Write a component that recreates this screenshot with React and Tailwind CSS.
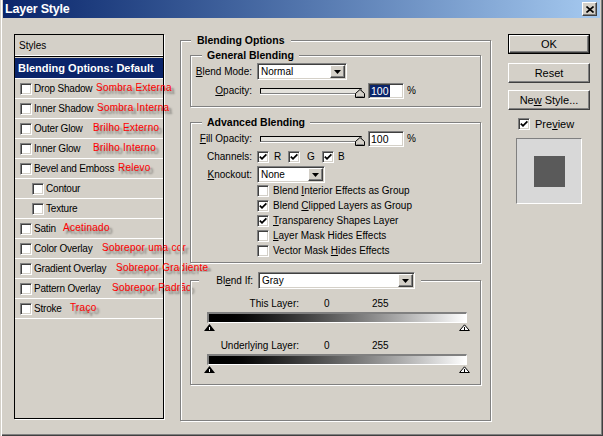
import React from 'react';

const SUNKEN = "border border-t-[#808080] border-l-[#808080] border-b-white border-r-white shadow-[inset_1px_1px_0_#404040,inset_-1px_-1px_0_#d4d0c8]";
const RAISED = "border border-t-white border-l-white border-b-[#404040] border-r-[#404040] shadow-[inset_-1px_-1px_0_#808080]";
const ETCH = "border border-[#808080] shadow-[1px_1px_0_#fff,inset_1px_1px_0_#fff]";

function Check({ checked }) {
  return (
    <span className={`flex w-[12px] h-[12px] shrink-0 bg-white items-center justify-center ${SUNKEN}`}>
      {checked && (
        <svg width="8" height="8" viewBox="0 0 8 8">
          <path d="M0.8 3.6 L3 5.8 L7.4 1.4" stroke="black" strokeWidth="1.8" fill="none" />
        </svg>
      )}
    </span>
  );
}

function Arrow() {
  return (
    <svg width="7" height="4" viewBox="0 0 7 4">
      <path d="M0 0H7L3.5 4Z" fill="black" />
    </svg>
  );
}

function Select({ className, text }) {
  return (
    <div className={`flex h-[17px] bg-white p-[1px] ${SUNKEN} ${className}`}>
      <span className="flex-1 flex items-center pl-[2px] text-[10px] leading-[12px] text-black">{text}</span>
      <span className={`w-[15px] h-full bg-[#d4d0c8] flex items-center justify-center ${RAISED}`}>
        <Arrow />
      </span>
    </div>
  );
}

function Legend({ className, children }) {
  return (
    <span className={`absolute top-[-7px] bg-[#d4d0c8] font-bold text-[10.5px] leading-[12px] text-black ${className}`}>
      {children}
    </span>
  );
}

function Slider() {
  return (
    <div className="relative w-[102px] h-[6px]">
      <div className="w-full h-full border border-t-black border-l-black border-b-[#808080] border-r-[#808080] bg-[#e4e2dc] shadow-[0_1px_0_#fff]" />
      <svg className="absolute left-[95px] top-[1px]" width="10" height="9" viewBox="0 0 10 9">
        <path d="M5 0.5 L9.5 4.5 V8.5 H0.5 V4.5 Z" fill="#d4d0c8" stroke="black" strokeWidth="1" />
        <path d="M1.5 7.5 H8.5" stroke="#808080" strokeWidth="1" />
      </svg>
    </div>
  );
}

function NumInput({ selected }) {
  return (
    <div className={`w-[36px] h-[16px] bg-white p-[1px] flex items-center ${SUNKEN}`}>
      <span className={`h-full flex items-center px-[1px] text-[10.5px] leading-[12px] ${selected ? 'bg-[#0a246a] text-white' : 'text-black'}`}>100</span>
    </div>
  );
}

function Triangles() {
  return (
    <div className="ml-[13px] w-[266px] h-[7px] flex justify-between">
      <svg width="11" height="7" viewBox="0 0 11 7">
        <path d="M5.5 0L11 7H0Z" fill="black" />
        <path d="M5.5 3V6" stroke="white" strokeWidth="1" />
      </svg>
      <svg width="11" height="7" viewBox="0 0 11 7">
        <path d="M5.5 0.8L10.4 6.5H0.6Z" fill="white" stroke="black" strokeWidth="1" />
        <path d="M5.5 3V6" stroke="black" strokeWidth="1" />
      </svg>
    </div>
  );
}

function GradBar() {
  return (
    <div className="ml-[16px] w-[260px] h-[11px] border-t-2 border-l-2 border-r border-b border-t-[#808080] border-l-[#808080] border-r-white border-b-white bg-linear-to-r from-black to-white" />
  );
}

const styleRows = [
  { label: 'Drop Shadow', red: 'Sombra Externa', pos: 'left-[81px]', pad: 'pl-[5px]' },
  { label: 'Inner Shadow', red: 'Sombra Interna', pos: 'left-[82px]', pad: 'pl-[5px]' },
  { label: 'Outer Glow', red: 'Brilho Externo', pos: 'left-[78px]', pad: 'pl-[5px]' },
  { label: 'Inner Glow', red: 'Brilho Interno', pos: 'left-[78px]', pad: 'pl-[5px]' },
  { label: 'Bevel and Emboss', red: 'Relevo', pos: 'left-[103px]', pad: 'pl-[5px]' },
  { label: 'Contour', red: null, pos: '', pad: 'pl-[17px]' },
  { label: 'Texture', red: null, pos: '', pad: 'pl-[17px]' },
  { label: 'Satin', red: 'Acetinado', pos: 'left-[48px]', pad: 'pl-[5px]' },
  { label: 'Color Overlay', red: 'Sobrepor uma cor', pos: 'left-[87px]', pad: 'pl-[5px]' },
  { label: 'Gradient Overlay', red: 'Sobrepor Gradiente', pos: 'left-[101px]', pad: 'pl-[5px]' },
  { label: 'Pattern Overlay', red: 'Sobrepor Padrão', pos: 'left-[97px]', pad: 'pl-[5px]' },
  { label: 'Stroke', red: 'Traço', pos: 'left-[55px]', pad: 'pl-[5px]' },
];

function Btn({ children, isDefault, className }) {
  if (isDefault) {
    return (
      <div className={`w-[82px] h-[20px] border border-black ${className}`}>
        <div className={`w-full h-full flex items-center justify-center text-[11px] text-black ${RAISED}`}>
          <span className="whitespace-pre">{children}</span>
        </div>
      </div>
    );
  }
  return (
    <div className={`w-[82px] h-[20px] flex items-center justify-center text-[11px] text-black ${RAISED} ${className}`}>
      <span className="whitespace-pre">{children}</span>
    </div>
  );
}

const U = ({ children }) => <span className="underline underline-offset-[1px]">{children}</span>;

export default function App() {
  return (
    <div className="w-[603px] h-[436px] bg-[#d4d0c8] font-['Liberation_Sans',Arial,sans-serif] text-black overflow-hidden shadow-[inset_1px_0_0_#d4d0c8,inset_2px_0_0_#fff,inset_-1px_-1px_0_#404040,inset_-2px_-2px_0_#808080]">
      {/* Title bar */}
      <div className="mx-[3px] h-[18px] flex items-center bg-linear-to-r from-[#0a246a] to-[#a6caf0]">
        <span className="pl-[2px] text-white font-bold text-[12.5px] leading-[15px] tracking-[-0.2px]">Layer Style</span>
        <div className={`ml-auto mr-[3px] w-[15px] h-[14px] bg-[#d4d0c8] flex items-center justify-center ${RAISED}`}>
          <svg width="8" height="7" viewBox="0 0 8 7">
            <path d="M0.5 0.5L7.5 6.5M7.5 0.5L0.5 6.5" stroke="black" strokeWidth="1.6" />
          </svg>
        </div>
      </div>

      <div className="flex items-start pt-[16px]">
        {/* Styles panel */}
        <div className="ml-[14px] w-[150px] h-[385px] border border-black shadow-[1px_1px_0_#fff] flex flex-col">
          <div className="h-[21px] flex items-center pl-[4px] text-[10px] border-b border-white">Styles</div>
          <div className="h-[1px] bg-black" />
          <div className="h-[1px]" />
          <div className="h-[21px] border-b border-white bg-[#0a246a] flex items-center pl-[3px] text-white font-bold text-[11px] leading-[13px]">
            Blending Options: Default
          </div>
          {styleRows.map((r) => (
            <div key={r.label} className={`relative h-[20px] border-b border-white flex items-center ${r.pad}`}>
              <Check />
              <span className="ml-[2px] text-[10px] leading-[12px] tracking-[-0.2px] whitespace-nowrap">{r.label}</span>
              {r.red && (
                <span className={`absolute ${r.pos} top-[3px] text-[10px] leading-[12px] tracking-[0.25px] whitespace-nowrap text-[#ff0000] [text-shadow:3px_3px_2px_rgba(0,0,0,0.45)]`}>
                  {r.red}
                </span>
              )}
            </div>
          ))}
        </div>

        {/* Blending Options */}
        <div className={`relative mt-[6px] ml-[16px] w-[311px] h-[381px] ${ETCH}`}>
          <Legend className="left-[10px] px-[6px]">Blending Options</Legend>

          {/* General Blending */}
          <div className={`relative ml-[9px] mt-[14px] w-[291px] h-[52px] ${ETCH}`}>
            <Legend className="left-[11px] px-[5px]">General Blending</Legend>
            <div className="flex items-center mt-[7px] h-[17px]">
              <span className="w-[61px] text-right text-[10px] leading-[12px]"><U>B</U>lend Mode:</span>
              <Select className="ml-[5px] w-[90px]" text="Normal" />
            </div>
            <div className="flex items-center mt-[3px] h-[16px]">
              <span className="w-[61px] text-right text-[10px] leading-[12px]"><U>O</U>pacity:</span>
              <div className="ml-[8px]"><Slider /></div>
              <div className="ml-[6px]"><NumInput selected /></div>
              <span className="ml-[3px] text-[10px] leading-[12px]">%</span>
            </div>
          </div>

          {/* Advanced Blending */}
          <div className={`relative ml-[9px] mt-[15px] w-[291px] h-[141px] ${ETCH}`}>
            <Legend className="left-[11px] px-[5px]">Advanced Blending</Legend>
            <div className="flex items-center mt-[8px] h-[16px]">
              <span className="w-[61px] text-right text-[10px] leading-[12px]"><U>F</U>ill Opacity:</span>
              <div className="ml-[8px]"><Slider /></div>
              <div className="ml-[6px]"><NumInput /></div>
              <span className="ml-[3px] text-[10px] leading-[12px]">%</span>
            </div>
            <div className="flex items-center mt-[4px] h-[12px]">
              <span className="w-[61px] text-right text-[10px] leading-[12px]">Channels:</span>
              <div className="ml-[5px] w-[31px] flex items-center">
                <Check checked />
                <span className="ml-[5px] text-[10px] leading-[12px]">R</span>
              </div>
              <div className="w-[34px] flex items-center">
                <Check checked />
                <span className="ml-[7px] text-[10px] leading-[12px]">G</span>
              </div>
              <div className="flex items-center">
                <Check checked />
                <span className="ml-[4px] text-[10px] leading-[12px]">B</span>
              </div>
            </div>
            <div className="flex items-center mt-[3px] h-[17px]">
              <span className="w-[61px] text-right text-[10px] leading-[12px]"><U>K</U>nockout:</span>
              <Select className="ml-[5px] w-[68px]" text="None" />
            </div>
            {[
              [false, <>Blend <U>I</U>nterior Effects as Group</>],
              [true, <>Blend <U>C</U>lipped Layers as Group</>],
              [true, <><U>T</U>ransparency Shapes Layer</>],
              [false, <><U>L</U>ayer Mask Hides Effects</>],
              [false, <>Vector Mask <U>H</U>ides Effects</>],
            ].map(([c, t], i) => (
              <div key={i} className="flex items-center h-[15px] pl-[66px]">
                <Check checked={c} />
                <span className="ml-[4px] text-[10px] leading-[12px] whitespace-nowrap">{t}</span>
              </div>
            ))}
          </div>

          {/* Blend If */}
          <div className={`relative ml-[9px] mt-[17px] w-[291px] h-[105px] ${ETCH}`}>
            <div className="absolute left-[8px] top-[-9px] w-[222px] h-[17px] bg-[#d4d0c8] flex items-center">
              <span className="w-[54px] text-right text-[10px] leading-[12px]">Bl<U>e</U>nd If:</span>
              <Select className="ml-[5px] w-[157px]" text="Gray" />
            </div>
            <div className="flex items-center mt-[17px] h-[12px] text-[10px] leading-[12px]">
              <span className="w-[108px] text-right">This Layer:</span>
              <span className="ml-[25px] w-[48px]">0</span>
              <span>255</span>
            </div>
            <div className="mt-[2px]"><GradBar /></div>
            <div className="mt-[1px]"><Triangles /></div>
            <div className="flex items-center mt-[9px] h-[12px] text-[10px] leading-[12px]">
              <span className="w-[108px] text-right">Underlying Layer:</span>
              <span className="ml-[25px] w-[48px]">0</span>
              <span>255</span>
            </div>
            <div className="mt-[2px]"><GradBar /></div>
            <div className="mt-[1px]"><Triangles /></div>
          </div>
        </div>

        {/* Right column */}
        <div className="ml-[17px] w-[82px] flex flex-col">
          <Btn isDefault>OK</Btn>
          <Btn className="mt-[9px]">Reset</Btn>
          <Btn className="mt-[7px]">Ne<U>w</U> Style...</Btn>
          <div className="flex items-center mt-[8px] ml-[10px] h-[12px]">
            <Check checked />
            <span className="ml-[5px] text-[11px] leading-[13px]">Pre<U>v</U>iew</span>
          </div>
          <div className="mt-[8px] ml-[8px] w-[66px] h-[66px] border border-t-[#808080] border-l-[#808080] border-b-white border-r-white bg-[#d8d8d8] flex items-center justify-center">
            <div className="w-[31px] h-[31px] bg-[#5a5a5a]" />
          </div>
        </div>
      </div>
    </div>
  );
}
